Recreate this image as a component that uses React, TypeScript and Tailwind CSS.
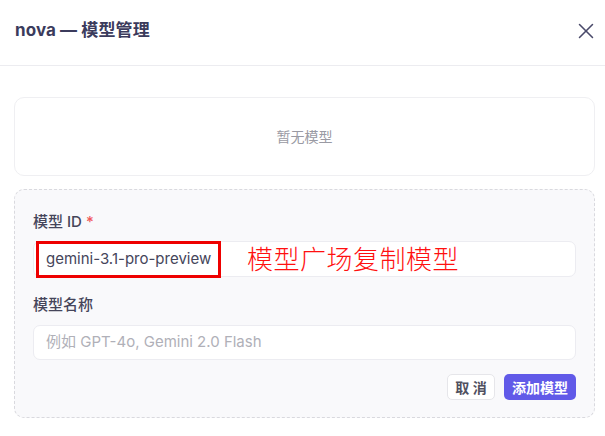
import { X } from "lucide-react"

const font = { fontFamily: 'Inter, "Noto Sans CJK SC", sans-serif' }

export default function App() {
  return (
    <div className="w-[605px] h-[436px] bg-white overflow-hidden" style={font}>
      {/* header */}
      <div className="h-[66px] flex items-center justify-between pl-[15px] pr-[6px] pb-[3px] border-b border-[#ececf0]">
        <h2 className="text-[17px] font-bold text-[#3b3b5c] tracking-[0.1px]">nova — 模型管理</h2>
        <button className="text-[#4a4a6a]">
          <X size={26} strokeWidth={1.4} />
        </button>
      </div>

      <div className="pl-[14px] pr-[10px] pt-[31px] flex flex-col gap-[13px]">
        {/* empty list */}
        <div className="h-[79px] rounded-[10px] border border-[#efeff2] flex items-center justify-center">
          <span className="text-[14px] text-[#9a9aa3]">暂无模型</span>
        </div>

        {/* add form */}
        <div className="rounded-[10px] border border-dashed border-[#d9d9de] bg-[#f9f9fb] px-[18px] pt-[22px] pb-[17px] flex flex-col">
          <label className="h-[20px] leading-[20px] text-[15px] font-medium text-[#45455a]">
            模型 ID <span className="text-[#f0585c]">*</span>
          </label>
          <div className="relative mt-[9px] h-[36px] rounded-[7px] border border-[#ececf1] bg-white flex items-center px-[12px]">
            <span className="text-[15px] text-[#45455a]">gemini-3.1-pro-preview</span>
            <div className="absolute left-[2px] top-[-1px] w-[185px] h-[37px] border-[3px] border-[#ee0000]" />
            <span className="absolute left-[213px] top-[1px] text-[26px] leading-[34px] font-light text-[#ff1010] tracking-[0.5px]">
              模型广场复制模型
            </span>
          </div>

          <label className="mt-[18px] h-[20px] leading-[20px] text-[15px] font-medium text-[#45455a]">模型名称</label>
          <div className="mt-[10px] h-[35px] rounded-[7px] border border-[#ececf1] bg-white flex items-center px-[12px]">
            <span className="text-[15px] text-[#b0b0b8]">例如 GPT-4o, Gemini 2.0 Flash</span>
          </div>

          <div className="mt-[14px] flex justify-end gap-[9px]">
            <button className="w-[48px] h-[26px] rounded-[5px] border border-[#e6e6ea] bg-white text-[14px] font-bold text-[#505060]">
              取 消
            </button>
            <button className="w-[72px] h-[26px] rounded-[5px] bg-[#615ae8] text-[14px] font-bold text-white">
              添加模型
            </button>
          </div>
        </div>
      </div>
    </div>
  )
}
